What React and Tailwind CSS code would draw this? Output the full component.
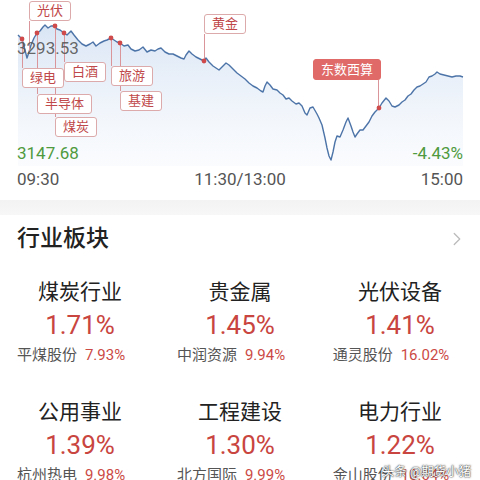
import React from "react";
import { ChevronRight } from "lucide-react";

const pts = [
  [18, 35], [22, 39], [25, 50], [27, 58], [29, 52], [31, 45], [34, 38], [37, 33], [40, 31], [43, 27],
  [45, 25], [48, 28], [51, 26], [55, 26], [57, 29], [60, 30], [64, 33], [67, 35], [71, 31], [74, 35],
  [78, 40], [82, 44], [86, 46], [90, 44], [93, 42], [96, 46], [100, 43], [104, 41], [107, 40], [111, 38],
  [114, 40], [117, 42], [120, 43], [124, 46], [128, 45], [131, 49], [135, 51], [139, 50], [143, 47],
  [147, 52], [151, 50], [155, 51], [158, 49], [161, 48], [165, 52], [169, 54], [173, 54], [177, 56],
  [181, 58], [184, 59], [186, 55], [189, 51], [192, 54], [196, 57], [200, 59], [204, 61], [206, 58],
  [209, 62], [213, 66], [216, 68], [219, 70], [222, 67], [226, 63], [229, 65], [233, 69], [237, 73],
  [241, 76], [245, 79], [249, 83], [253, 86], [257, 88], [261, 91], [263, 92], [265, 86], [267, 82],
  [270, 85], [273, 89], [277, 90], [280, 93], [283, 95], [286, 99], [289, 98], [292, 101], [296, 104],
  [299, 103], [302, 106], [305, 113], [307, 115], [310, 108], [313, 107], [317, 114], [319, 118],
  [322, 125], [325, 138], [327, 148], [329, 156], [331, 160], [333, 152], [335, 142], [337, 136],
  [340, 137], [343, 130], [346, 122], [348, 118], [351, 126], [353, 132], [355, 137], [357, 134],
  [360, 130], [363, 130], [366, 126], [369, 122], [372, 116], [375, 112], [379, 108], [382, 103],
  [386, 98], [389, 101], [392, 106], [395, 107], [399, 105], [402, 102], [405, 100], [408, 96],
  [411, 94], [414, 90], [417, 87], [420, 86], [423, 84], [426, 82], [429, 77], [432, 76], [435, 74],
  [437, 72], [440, 74], [444, 75], [448, 76], [452, 77], [456, 76], [460, 76], [463, 77],
];

const line = pts.map((p, i) => (i ? "L" : "M") + p[0] + "," + p[1]).join(" ");
const area = line + " L463,166 L18,166 Z";

// marker lines: [x, y1, y2]
const marks = [
  [29.5, 21, 52], [22.5, 39, 68], [37.5, 33, 94], [55.5, 26, 117], [64.5, 33, 62],
  [111.5, 38, 66], [120.5, 43, 91], [204.5, 34, 61], [378.5, 80, 108],
];

const dots = [[22, 39], [37, 33], [55, 26], [64, 33], [111, 38], [120, 43], [204, 61], [379, 108]];

const tags = [
  { text: "光伏", cls: "left-[29px] top-[1px]" },
  { text: "绿电", cls: "left-[22px] top-[68px]" },
  { text: "白酒", cls: "left-[64px] top-[62px]" },
  { text: "半导体", cls: "left-[37px] top-[94px]" },
  { text: "煤炭", cls: "left-[55px] top-[117px]" },
  { text: "旅游", cls: "left-[111px] top-[66px]" },
  { text: "基建", cls: "left-[120px] top-[91px]" },
  { text: "黄金", cls: "left-[204px] top-[14px]" },
];

const sectors = [
  { name: "煤炭行业", pct: "1.71%", stock: "平煤股份", sp: "7.93%" },
  { name: "贵金属", pct: "1.45%", stock: "中润资源", sp: "9.94%" },
  { name: "光伏设备", pct: "1.41%", stock: "通灵股份", sp: "16.02%" },
  { name: "公用事业", pct: "1.39%", stock: "杭州热电", sp: "9.98%" },
  { name: "工程建设", pct: "1.30%", stock: "北方国际", sp: "9.99%" },
  { name: "电力行业", pct: "1.22%", stock: "金山股份", sp: "10.04%" },
];

export default function App() {
  return (
    <div className="relative w-[480px] h-[480px] overflow-hidden bg-white font-[Roboto,'Noto_Sans_CJK_SC',sans-serif]">
      {/* Chart */}
      <div className="relative h-[168px]">
        <svg className="absolute inset-0" width="480" height="168" viewBox="0 0 480 168">
          <defs>
            <linearGradient id="fill" x1="0" y1="0" x2="0" y2="1">
              <stop offset="0%" stopColor="#c9daf0" stopOpacity="0.7" />
              <stop offset="100%" stopColor="#eef3fa" stopOpacity="0.3" />
            </linearGradient>
          </defs>
          <path d={area} fill="url(#fill)" />
          <path d={line} fill="none" stroke="#4d74a8" strokeWidth="1.4" strokeLinejoin="round" />
          {marks.map(([x, y1, y2], i) => (
            <line key={i} x1={x} y1={y1} x2={x} y2={y2} stroke="#d9959a" strokeWidth="1" />
          ))}
          {dots.map(([x, y], i) => (
            <circle key={i} cx={x} cy={y} r="2.4" fill="#cf4b4b" />
          ))}
        </svg>

        <div className="absolute left-[17px] top-[38px] text-[17px] leading-[20px] text-[#555]/90">3293.53</div>
        <div className="absolute left-[17px] top-[143px] text-[17px] leading-[20px] text-[#4f9a3e]">3147.68</div>
        <div className="absolute right-[17px] top-[143px] text-[17px] leading-[20px] text-[#4f9a3e]">-4.43%</div>

        {tags.map((t) => (
          <div
            key={t.text}
            className={"absolute h-[20px] px-[7px] flex items-center bg-white border border-[#dcaaaa] rounded-[3px] text-[13px] text-[#c0484a] " + t.cls}
          >
            {t.text}
          </div>
        ))}
        <div className="absolute left-[313px] top-[59px] h-[21px] px-[7px] flex items-center bg-[#df6a67] border border-[#df6a67] rounded-[3px] text-[13px] text-white">
          东数西算
        </div>
      </div>

      {/* Time axis */}
      <div className="h-[32px] px-[17px] pt-[1px] flex justify-between text-[17px] leading-[20px] text-[#555]">
        <span>09:30</span>
        <span>11:30/13:00</span>
        <span>15:00</span>
      </div>

      <div className="h-[15px] bg-gradient-to-b from-[#f3f3f3] to-[#f7f7f7]" />

      {/* Sector header */}
      <div className="h-[48px] pl-[17px] pr-[12px] flex items-center justify-between">
        <span className="text-[23px] font-medium text-[#222]">行业板块</span>
        <ChevronRight size={22} strokeWidth={1.4} color="#bbbbbb" />
      </div>

      <div className="grid grid-cols-3 gap-y-[32px] pt-[15px]">
        {sectors.map((s) => (
          <div key={s.name} className="flex flex-col items-center">
            <div className="text-[21px] leading-[28px] text-[#222]">{s.name}</div>
            <div className="mt-[3px] text-[26px] leading-[32px] text-[#c94540]">{s.pct}</div>
            <div className="mt-[3px] pr-[18px] text-[15px] leading-[22px] whitespace-nowrap">
              <span className="text-[#555]">{s.stock}</span>
              <span className="ml-[8px] text-[#cc4a45]">{s.sp}</span>
            </div>
          </div>
        ))}
      </div>

      {/* watermark */}
      <div className="absolute left-[382px] top-[463px] text-[12.5px] leading-[18px] whitespace-nowrap text-white [text-shadow:0_0_2px_#333,0_0_1px_#333]">
        头条 @期货小猪
      </div>
    </div>
  );
}
